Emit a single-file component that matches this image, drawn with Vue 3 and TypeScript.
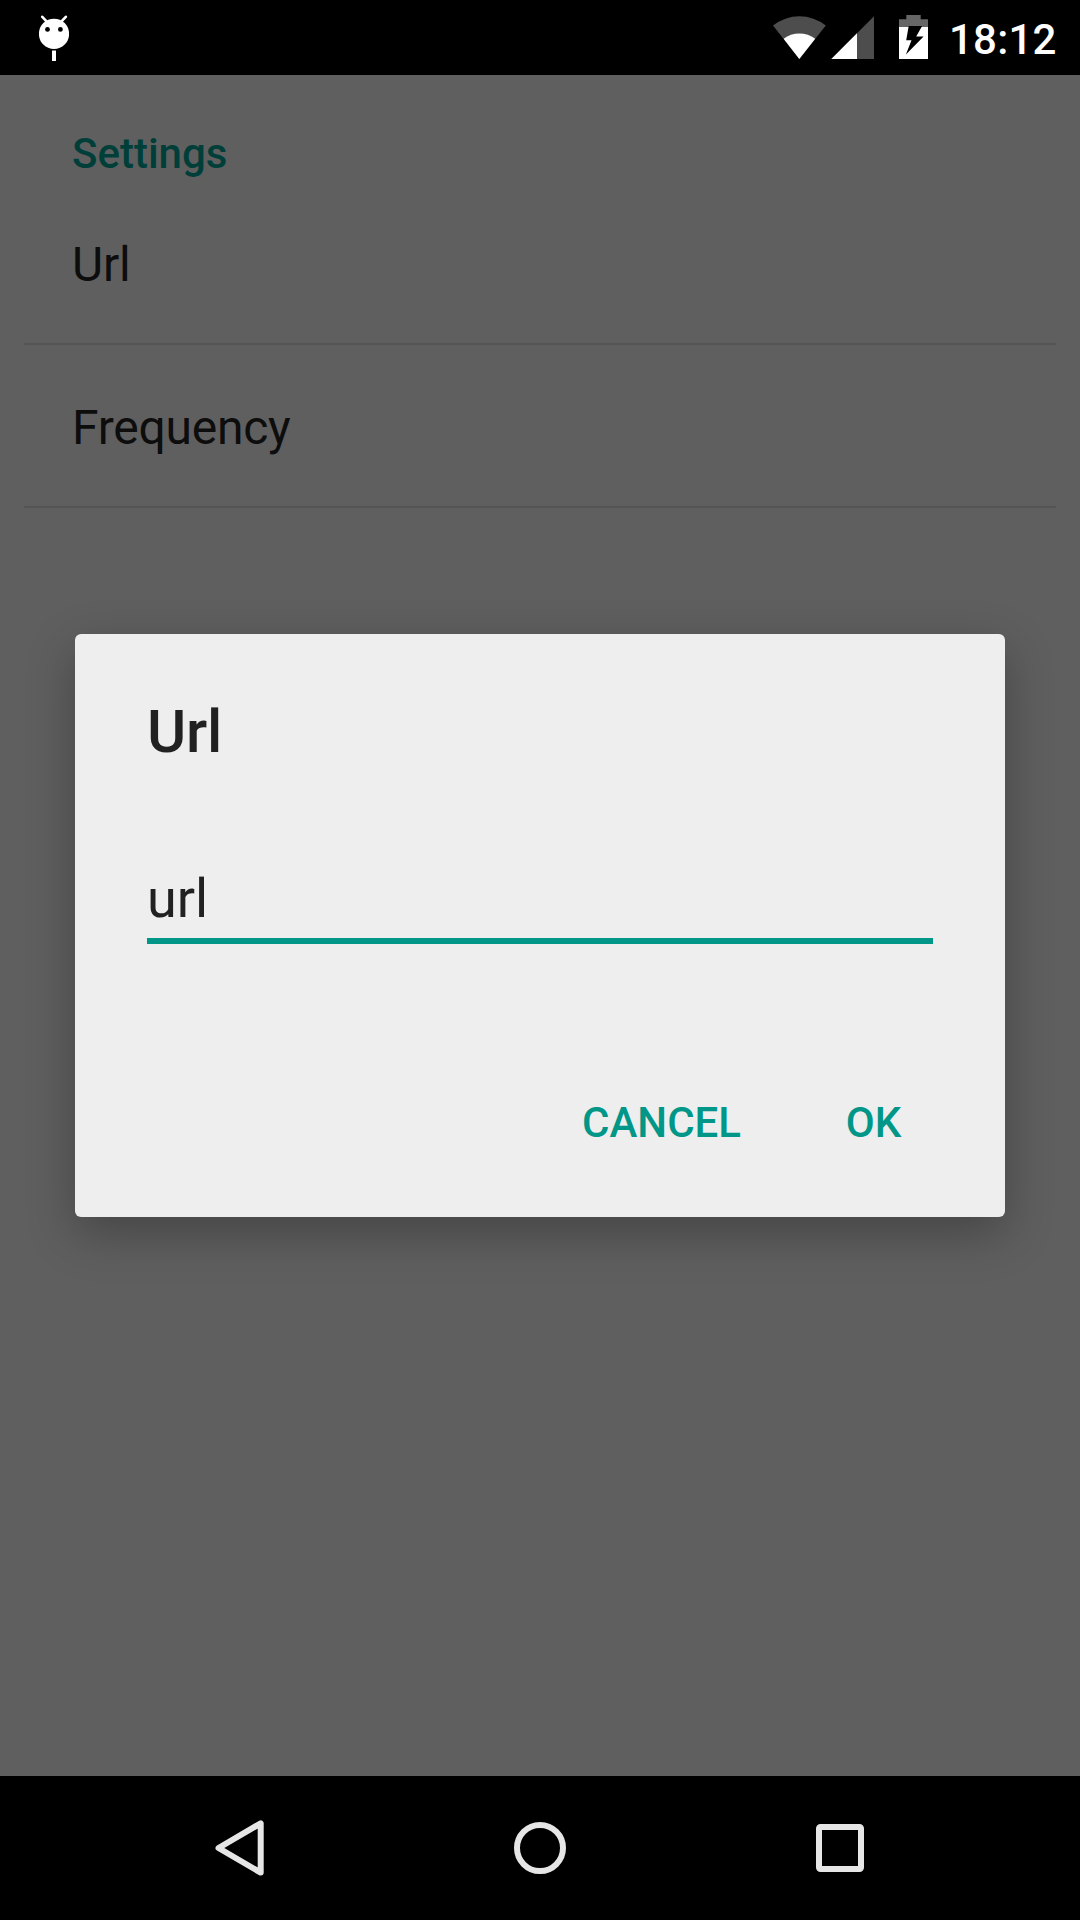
<script setup lang="ts">
import { ref } from 'vue'

const preferences: string[] = ['Url', 'Frequency']
const url = ref<string>('url')
</script>

<template>
  <div class="screen">
    <header class="status">
      <svg class="debug" width="30" height="48" viewBox="39 15 30 48">
        <path d="M42.3 16.8 47 21.8M65.8 16.8 61 21.8" stroke="#fff" stroke-width="2.6" stroke-linecap="round" />
        <circle cx="54" cy="33.8" r="15.1" fill="#fff" />
        <circle cx="47.5" cy="29.4" r="2.4" />
        <circle cx="60.4" cy="29.4" r="2.4" />
        <path d="M52 50.5h4V61h-4z" fill="#fff" />
      </svg>
      <div class="indicators">
        <svg width="156" height="46" viewBox="773 14 156 46">
          <path d="M799.3 59 773 25.5a42.7 42.7 0 0 1 52.8 0z" fill="#4d4d4d" />
          <path d="M799.3 59 783.6 38.8a26 26 0 0 1 31.6 0z" fill="#fff" />
          <path d="M831.3 59H874V16.3z" fill="#4d4d4d" />
          <path d="M831.3 59H857V33.3z" fill="#fff" />
          <path d="M899 27.3v-8h7.3V15h14.4v4.3H928v8z" fill="#666" />
          <path d="M899 27h29v32h-29z" fill="#fff" />
          <path d="M908.7 26h13.4l-5.9 10.5h7.4L905.9 54.5l5.6-14.2h-5.3z" />
        </svg>
        <span class="clock">18:12</span>
      </div>
    </header>

    <main class="content">
      <h2 class="category">Settings</h2>
      <ul class="list">
        <li v-for="name in preferences" :key="name" class="row"><span>{{ name }}</span></li>
      </ul>
      <section class="dialog">
        <h1 class="title">Url</h1>
        <input v-model="url" class="field" type="text" />
        <div class="actions">
          <button type="button">CANCEL</button>
          <button type="button">OK</button>
        </div>
      </section>
    </main>

    <nav class="nav">
      <svg width="50" height="58" viewBox="215 1819 50 58">
        <path d="M260.7 1823.3v49.3L218.5 1848z" />
      </svg>
      <svg width="52" height="52" viewBox="514 1822 52 52">
        <circle cx="540" cy="1848" r="23" />
      </svg>
      <svg width="48" height="48" viewBox="816 1824 48 48">
        <rect x="819" y="1827" width="42" height="42" rx="1.5" />
      </svg>
    </nav>
  </div>
</template>

<style>
body {
  margin: 0;
  background: #000;
}
</style>

<style scoped>
.screen {
  display: flex;
  flex-direction: column;
  width: 1080px;
  height: 1920px;
  overflow: hidden;
  background: #5f5f5f;
  font-family: Roboto, sans-serif;
}
.status {
  display: flex;
  justify-content: space-between;
  box-sizing: border-box;
  height: 75px;
  padding: 14px 24px 0 39px;
  background: #000;
}
.debug {
  margin-top: 1px;
}
.indicators {
  display: flex;
}
.indicators svg {
  flex: none;
}
.clock {
  width: 107px;
  margin-left: 20px;
  color: #fff;
  font-size: 42px;
  font-weight: 500;
  line-height: 51px;
  letter-spacing: 0.2px;
  text-align: right;
}
.content {
  position: relative;
  flex: 1;
}
.category {
  margin: 0;
  padding: 54px 72px 3px;
  color: #003f39;
  font-size: 42px;
  font-weight: 500;
  line-height: 50px;
}
.list {
  margin: 0;
  padding: 0 24px;
  list-style: none;
}
.row {
  height: 161px;
  padding: 0 48px;
  border-bottom: 2px solid #545454;
  color: #0d0d0d;
  font-size: 48px;
  line-height: 165px;
  letter-spacing: -0.25px;
}
.dialog {
  position: absolute;
  top: 559px;
  left: 75px;
  box-sizing: border-box;
  width: 930px;
  height: 583px;
  padding: 63px 72px 0;
  border-radius: 6px;
  background: #eee;
  box-shadow: 0 16px 48px rgba(0, 0, 0, 0.28);
}
.title {
  margin: 0;
  color: #212121;
  font-size: 60px;
  font-weight: 500;
  line-height: 70px;
  letter-spacing: -0.2px;
}
.field {
  display: block;
  box-sizing: border-box;
  width: 786px;
  height: 82px;
  margin: 95px 0 0;
  padding: 0 0 4px;
  border: 0;
  border-bottom: 6px solid #009688;
  outline: 0;
  background: transparent;
  color: #212121;
  font: 400 54px/70px Roboto, sans-serif;
}
.actions {
  display: flex;
  justify-content: flex-end;
  gap: 44px;
  margin: 107px 1px 0 0;
}
.actions button {
  min-width: 117px;
  height: 144px;
  padding: 0 30px;
  border: 0;
  background: transparent;
  color: #009688;
  font: 500 42px/50px Roboto, sans-serif;
}
.nav {
  display: flex;
  align-items: center;
  box-sizing: border-box;
  height: 144px;
  padding-left: 215px;
  background: #000;
}
.nav svg {
  fill: none;
  stroke: #e6e6e6;
  stroke-width: 6;
  stroke-linejoin: round;
}
.nav svg:nth-child(2) {
  margin-left: 249px;
}
.nav svg:nth-child(3) {
  margin-left: 250px;
}
</style>
